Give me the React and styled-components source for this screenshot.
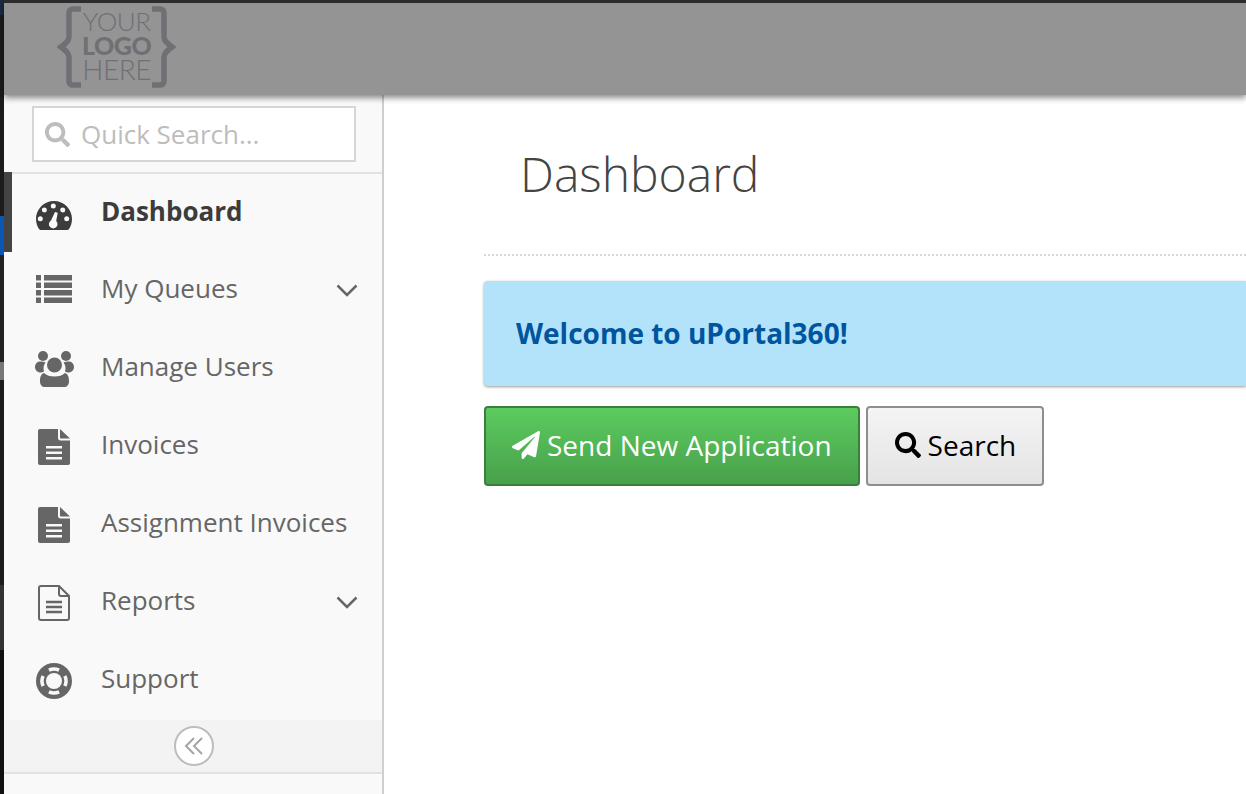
import React from 'react';
import styled, { createGlobalStyle } from 'styled-components';
import { FaSearch, FaPaperPlane } from 'react-icons/fa';

const GlobalStyle = createGlobalStyle`
  html, body {
    margin: 0;
    padding: 0;
    height: 100%;
    overflow: hidden;
    font-family: "Open Sans", "Liberation Sans", sans-serif;
  }
  #root { height: 100%; }
`;

const Screen = styled.div`
  height: 794px;
  padding-left: 4px;
  box-sizing: border-box;
  display: flex;
  flex-direction: column;
  background: linear-gradient(#1b2a44 0 15px, #1c1c1c 15px 216px, #0b56b0 216px 255px, #222 255px 362px, #777 362px 380px, #1c1c1c 380px 585px, #333 585px 650px, #111 650px);
  overflow: hidden;
`;

const Header = styled.header`
  flex: none;
  height: 95px;
  box-sizing: border-box;
  border-top: 3px solid #2d2d2d;
  padding-left: 53px;
  background: #949494;
  box-shadow: 0 3px 6px rgba(0, 0, 0, 0.45);
  position: relative;
  z-index: 2;
  display: flex;
  align-items: flex-start;
`;

const Logo = styled.div`
  display: flex;
  align-items: center;
  margin-top: 3px;
  color: #6f7074;
`;

const LogoText = styled.div`
  display: flex;
  flex-direction: column;
  align-items: center;
  padding: 0 1px;
  font-family: Lato, "Liberation Sans", sans-serif;
  font-size: 26px;
  line-height: 24px;
  font-weight: 300;
  letter-spacing: -0.5px;
  position: relative;
  top: -2px;
  strong { font-weight: 900; font-size: 25px; }
  span + strong + span { font-size: 28px; }
`;

const Body = styled.div`
  flex: 1;
  display: flex;
  min-height: 0;
`;

const Sidebar = styled.aside`
  flex: none;
  width: 378px;
  background: #f9f9f9;
  border-right: 2px solid #cfcfcf;
  display: flex;
  flex-direction: column;
`;

const SearchBox = styled.div`
  height: 66px;
  padding: 11px 26px 0 28px;
  border-bottom: 2px solid #e2e2e2;
  display: flex;
  align-items: flex-start;
`;

const SearchField = styled.div`
  flex: 1;
  height: 56px;
  box-sizing: border-box;
  background: #fff;
  border: 2px solid #d5d5dc;
  display: flex;
  align-items: center;
  gap: 11px;
  padding-left: 11px;
  color: #bdbdbd;
  font-size: 26px;
  svg { font-size: 25px; flex: none; }
`;

const Nav = styled.nav`
  display: flex;
  flex-direction: column;
  margin-top: -1px;
`;

const NavItem = styled.a`
  height: 78px;
  display: flex;
  align-items: center;
  position: relative;
  padding-left: 32px;
  padding-right: 24px;
  color: ${(p) => (p.$active ? '#3c3c3c' : '#666')};
  font-size: 26px;
  font-weight: ${(p) => (p.$active ? 700 : 400)};
  svg { flex: none; }
  ${(p) => p.$active && `
    &::before {
      content: '';
      position: absolute;
      left: 0;
      top: -1px;
      bottom: -1px;
      width: 8px;
      background: #444;
    }
  `}
`;

const NavIcon = styled.span`
  flex: none;
  width: 36px;
  height: 36px;
  margin-right: 29px;
  display: flex;
  align-items: center;
  justify-content: center;
  transform: translateY(${(p) => p.$shift}px);
`;

const NavLabel = styled.span`
  flex: 1;
  transform: translateY(${(p) => (p.$active ? -1 : -2)}px);
`;

const Collapse = styled.div`
  margin-top: 1px;
  padding-left: 2px;
  height: 52px;
  background: #f3f3f3;
  border-bottom: 2px solid #e2e2e2;
  display: flex;
  align-items: center;
  justify-content: center;
`;

const CollapseButton = styled.button`
  width: 40px;
  height: 40px;
  padding: 0;
  border: 2px solid #bdbdbd;
  border-radius: 50%;
  background: #fff;
  color: #a5a5a5;
  display: flex;
  align-items: center;
  justify-content: center;
`;

const Main = styled.main`
  flex: 1;
  min-width: 0;
  background: #fff;
  padding-left: 100px;
`;

const Title = styled.h1`
  margin: 0;
  height: 161px;
  box-sizing: border-box;
  padding: 46px 0 0 36px;
  border-bottom: 2px dotted #d8d8d8;
  font-size: 48px;
  line-height: 66px;
  font-weight: 300;
  color: #444;
`;

const Alert = styled.div`
  margin-top: 25px;
  height: 105px;
  box-sizing: border-box;
  display: flex;
  align-items: center;
  padding: 0 0 2px 32px;
  background: #b3e3fa;
  border-radius: 4px 0 0 4px;
  box-shadow: 0 1px 3px rgba(0, 0, 0, 0.4);
  color: #00559f;
  font-size: 28px;
  font-weight: 700;
`;

const Actions = styled.div`
  margin-top: 20px;
  display: flex;
  gap: 6px;
`;

const Button = styled.button`
  height: 80px;
  box-sizing: border-box;
  padding: 0 26px 2px ${(p) => (p.$primary ? 26 : 27)}px;
  display: flex;
  align-items: center;
  gap: 7px;
  font-family: inherit;
  font-size: 28px;
  border-radius: 4px;
  border: 2px solid ${(p) => (p.$primary ? '#3a7f3c' : '#8e8e8e')};
  background: ${(p) =>
    p.$primary
      ? 'linear-gradient(#5ccb5f, #48a04b)'
      : 'linear-gradient(#f4f4f4, #e4e4e4)'};
  color: ${(p) => (p.$primary ? '#fff' : '#000')};
`;

const Dashboard = () => (
  <svg width="36" height="29" viewBox="0 0 36 29">
    <path
      fill="currentColor"
      fillRule="evenodd"
      d="M18 0C8 0 0 8 0 18c0 3.500 1 7 3 10 .4.6 1 1 1.700 1h26.600c.7 0 1.300-.4 1.700-1 2-3 3-6.500 3-10C36 8 28 0 18 0zM17.300 2.500a2.500 2.500 0 1 1 0 5 2.500 2.500 0 0 1 0-5zM8.300 6.500a2.500 2.500 0 1 1 0 5 2.500 2.500 0 0 1 0-5zM26.700 6.500a2.500 2.500 0 1 1 0 5 2.500 2.500 0 0 1 0-5zM4.300 15.200a2.500 2.500 0 1 1 0 5 2.500 2.500 0 0 1 0-5zM30.700 15.200a2.500 2.500 0 1 1 0 5 2.500 2.500 0 0 1 0-5zM19 11l2.700.8-1.500 8.200a4.300 4.300 0 1 1-5.200 -.6z"
    />
  </svg>
);

const ListIcon = () => (
  <svg width="36" height="28" viewBox="0 0 36 28" fill="currentColor">
    <rect y="0" width="5" height="5.500" />
    <rect x="8" y="0" width="28" height="5.500" />
    <rect y="7.500" width="5" height="5.500" />
    <rect x="8" y="7.500" width="28" height="5.500" />
    <rect y="15" width="5" height="5.500" />
    <rect x="8" y="15" width="28" height="5.500" />
    <rect y="22.500" width="5" height="5.500" />
    <rect x="8" y="22.500" width="28" height="5.500" />
  </svg>
);

const UsersIcon = () => (
  <svg width="39" height="36" viewBox="0 0 39 36" fill="currentColor">
    <circle cx="8" cy="5" r="5" />
    <circle cx="31" cy="5" r="5" />
    <path d="M5 10.500c-3 0-5 2.500-5 5.500 0 3 2.500 5.500 5.500 5.500 1 0 2-.2 3.500-1-1-3-.5-6.500 1.500-9-1.500-.7-3.500-1-5.500-1zM34 10.500c3 0 5 2.500 5 5.500 0 3-2.500 5.500-5.500 5.500-1 0-2-.2-3.500-1 1-3 .5-6.500-1.500-9 1.500-.7 3.500-1 5.500-1z" />
    <circle cx="19.500" cy="14" r="7.500" />
    <path d="M9 22c2.500 2.500 6 3.500 10.500 3.500S27.500 24.500 30 22c3 1 4 4 4 8 0 4-2 6-5 6H10c-3 0-5-2-5-6 0-4 1-7 4-8z" />
  </svg>
);

const FileIcon = () => (
  <svg width="32" height="36" viewBox="0 0 32 36">
    <path
      fill="currentColor"
      fillRule="evenodd"
      d="M2 0h18v9c0 1.500 1 2.500 2.500 2.500H32V34c0 1.200-.8 2-2 2H2c-1.200 0-2-.8-2-2V2C0 .8.800 0 2 0zM8 17v2.500h16V17zM8 22.500V25h16v-2.500zM8 28v2.500h16V28z"
    />
    <path fill="currentColor" d="M22 0l10 9.500H23c-.6 0-1-.4-1-1z" />
  </svg>
);

const FileOutlineIcon = () => (
  <svg width="32" height="36" viewBox="0 0 32 36" fill="none" stroke="currentColor" strokeWidth="2">
    <path d="M3 1h18l10 10v22c0 1.200-.8 2-2 2H3c-1.200 0-2-.8-2-2V3c0-1.200.8-2 2-2z" />
    <path d="M21 1v8c0 1.200.8 2 2 2h8" />
    <path d="M8 17h16M8 22h16M8 27h16" strokeWidth="2.500" />
  </svg>
);

const RingIcon = () => (
  <svg width="36" height="36" viewBox="0 0 36 36">
    <circle cx="18" cy="18" r="18" fill="currentColor" />
    <circle cx="18" cy="18" r="8" fill="#f9f9f9" />
    <path
      fill="none"
      stroke="#f9f9f9"
      strokeWidth="3.500"
      d="M12.930 7.120A12 12 0 0 1 23.070 7.120M28.880 12.930A12 12 0 0 1 28.880 23.070M23.070 28.880A12 12 0 0 1 12.930 28.880M7.120 23.070A12 12 0 0 1 7.120 12.930"
    />
  </svg>
);

const Braces = ({ flip }) => (
  <svg
    width="24"
    height="82"
    viewBox="0 0 24 82"
    fill="none"
    stroke="currentColor"
    strokeWidth="5.500"
    style={flip ? { transform: 'scaleX(-1)' } : undefined}
  >
    <path d="M24 3h-8c-2.500 0-4 1.500-4 4v24c0 4-4 7-8 10 4 3 8 6 8 10v24c0 2.500 1.500 4 4 4h8" />
  </svg>
);

const items = [
  { label: 'Dashboard', icon: <Dashboard />, shift: 3, active: true },
  { label: 'My Queues', icon: <ListIcon />, shift: -1, arrow: true },
  { label: 'Manage Users', icon: <UsersIcon />, shift: 1 },
  { label: 'Invoices', icon: <FileIcon />, shift: 1 },
  { label: 'Assignment Invoices', icon: <FileIcon />, shift: 1 },
  { label: 'Reports', icon: <FileOutlineIcon />, shift: 1, arrow: true },
  { label: 'Support', icon: <RingIcon />, shift: 1 },
];

const App = () => (
  <Screen>
    <GlobalStyle />
    <Header>
      <Logo>
        <Braces />
        <LogoText>
          <span>YOUR</span>
          <strong>LOGO</strong>
          <span>HERE</span>
        </LogoText>
        <Braces flip />
      </Logo>
    </Header>
    <Body>
      <Sidebar>
        <SearchBox>
          <SearchField>
            <FaSearch />
            Quick Search...
          </SearchField>
        </SearchBox>
        <Nav>
          {items.map((item) => (
            <NavItem key={item.label} $active={item.active}>
              <NavIcon $shift={item.shift}>{item.icon}</NavIcon>
              <NavLabel $active={item.active}>{item.label}</NavLabel>
              {item.arrow && (
                <svg width="22" height="13" viewBox="0 0 22 13" fill="none" stroke="#666" strokeWidth="2.500">
                  <path d="M1.500 1.500L11 11l9.500-9.500" />
                </svg>
              )}
            </NavItem>
          ))}
        </Nav>
        <Collapse>
          <CollapseButton aria-label="Collapse">
            <svg width="20" height="18" viewBox="0 0 20 18" fill="none" stroke="currentColor" strokeWidth="2">
              <path d="M10 1L2 9l8 8M18 1l-8 8 8 8" />
            </svg>
          </CollapseButton>
        </Collapse>
      </Sidebar>
      <Main>
        <Title>Dashboard</Title>
        <Alert>Welcome to uPortal360!</Alert>
        <Actions>
          <Button $primary>
            <FaPaperPlane size={28} />
            Send New Application
          </Button>
          <Button>
            <FaSearch size={26} />
            Search
          </Button>
        </Actions>
      </Main>
    </Body>
  </Screen>
);

export default App;
